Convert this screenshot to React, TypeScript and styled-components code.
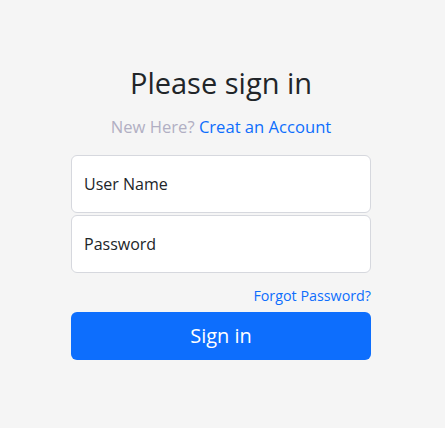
import {styled, createGlobalStyle} from "styled-components"

const GlobalStyle = createGlobalStyle`
  html, body {
    margin: 0;
    padding: 0;
    background: #f5f5f5;
    font-family: "Open Sans", "Noto Sans", sans-serif;
    color: #212529;
  }
`

const App = () => {
  return (
    <>
      <GlobalStyle />
      <Page>
        <Form onSubmit={(e) => e.preventDefault()}>
          <Title>Please sign in</Title>
          <Subtitle>
            <Muted>New Here?</Muted> <Link href="#">Creat an Account</Link>
          </Subtitle>
          <Fields>
            <Input type="text" placeholder="User Name" />
            <Input type="password" placeholder="Password" />
          </Fields>
          <Forgot>
            <SmallLink href="#">Forgot Password?</SmallLink>
          </Forgot>
          <Button type="submit">Sign in</Button>
        </Form>
      </Page>
    </>
  )
}

export default App

const Page = styled.main`
  display: flex;
  justify-content: center;
  padding: 66px 3px 0 0;
  height: 428px;
  box-sizing: border-box;
`

const Form = styled.form`
  width: 300px;
  display: flex;
  flex-direction: column;
  text-align: center;
`

const Title = styled.h1`
  margin: 0;
  font-size: 29px;
  font-weight: 400;
  line-height: 1.2;
`

const Subtitle = styled.p`
  margin: 14px 0 16px;
  font-size: 16.6px;
  line-height: 24px;
`

const Muted = styled.span`
  color: #b1afc3;
`

const Link = styled.a`
  color: #0d6efd;
  text-decoration: none;
`

const Fields = styled.div`
  display: flex;
  flex-direction: column;
  row-gap: 2px;
`

const Input = styled.input`
  box-sizing: border-box;
  height: 58px;
  padding: 0 12px;
  border: 1px solid #d6d8de;
  border-radius: 6px;
  background: #fff;
  font-family: inherit;
  font-size: 16px;
  color: #212529;
  outline: none;

  &::placeholder {
    color: #212529;
    opacity: 1;
  }
`

const Forgot = styled.div`
  text-align: right;
  margin: 12px 0 6px;
  line-height: 20px;
`

const SmallLink = styled.a`
  color: #0d6efd;
  font-size: 14.3px;
  text-decoration: none;
`

const Button = styled.button`
  height: 48px;
  border: 0;
  border-radius: 6px;
  background: #0d6efd;
  color: #fff;
  font-family: inherit;
  font-size: 20px;
  cursor: pointer;
`
